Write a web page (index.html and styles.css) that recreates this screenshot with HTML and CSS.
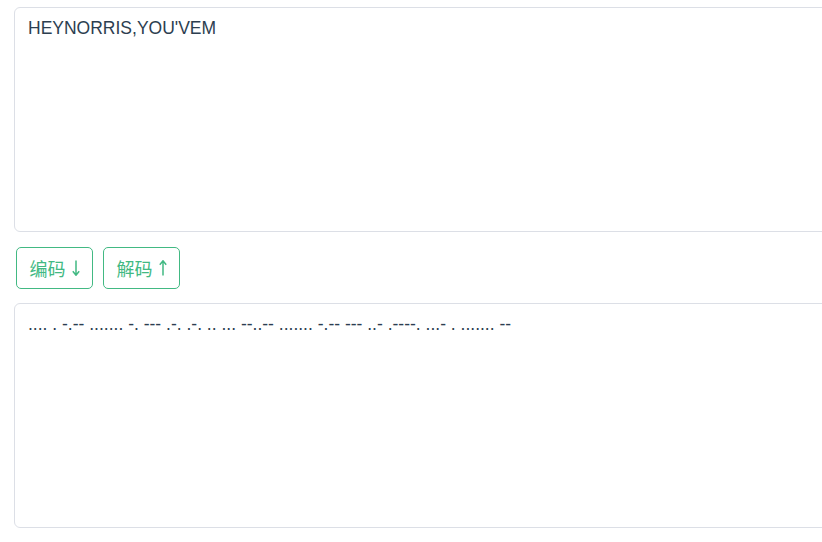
FILE: index.html
```html
<!DOCTYPE html>
<html lang="zh">
<head>
<meta charset="utf-8">
<title>Morse</title>
<link rel="stylesheet" href="styles.css">
</head>
<body>
<div class="page">
  <textarea class="box" spellcheck="false">HEYNORRIS,YOU'VEM</textarea>
  <div class="actions">
    <button class="btn">编码<svg class="arrow" width="8" height="16" viewBox="0 0 8 16"><path d="M4 0.5V15M0.8 11.2L4 15.2L7.2 11.2" fill="none" stroke="currentColor" stroke-width="1.5"/></svg></button>
    <button class="btn">解码<svg class="arrow" width="8" height="16" viewBox="0 0 8 16"><path d="M4 15.5V1M0.8 4.8L4 0.8L7.2 4.8" fill="none" stroke="currentColor" stroke-width="1.5"/></svg></button>
  </div>
  <textarea class="box" spellcheck="false">.... . -.-- ....... -. --- .-. .-. .. ... --..-- ....... -.-- --- ..- .----. ...- . ....... --</textarea>
</div>
</body>
</html>
```
FILE: styles.css
```css
html, body {
  margin: 0;
  padding: 0;
  background: #fff;
  overflow: hidden;
}
.page {
  padding: 7px 0 0 14px;
  display: flex;
  flex-direction: column;
  width: 900px;
}
.box {
  display: block;
  box-sizing: border-box;
  width: 900px;
  height: 225px;
  border: 1px solid #dcdfe6;
  border-radius: 6px;
  padding: 9px 13px;
  resize: none;
  outline: none;
  color: #2c3e50;
  font-family: "Liberation Sans", Arial, sans-serif;
  font-size: 17.5px;
  line-height: 22px;
  background: #fff;
  margin: 0;
}
.actions {
  display: flex;
  gap: 10px;
  padding: 15px 0 14px 2px;
}
.btn {
  box-sizing: border-box;
  height: 42px;
  width: 77px;
  padding: 0;
  border: 1px solid #42b983;
  border-radius: 5px;
  background: #fff;
  color: #42b983;
  font-size: 18px;
  font-family: "Noto Sans CJK SC", sans-serif;
  cursor: pointer;
  display: flex;
  align-items: center;
  justify-content: center;
  gap: 6px;
}
.arrow {
  display: block;
}
```
